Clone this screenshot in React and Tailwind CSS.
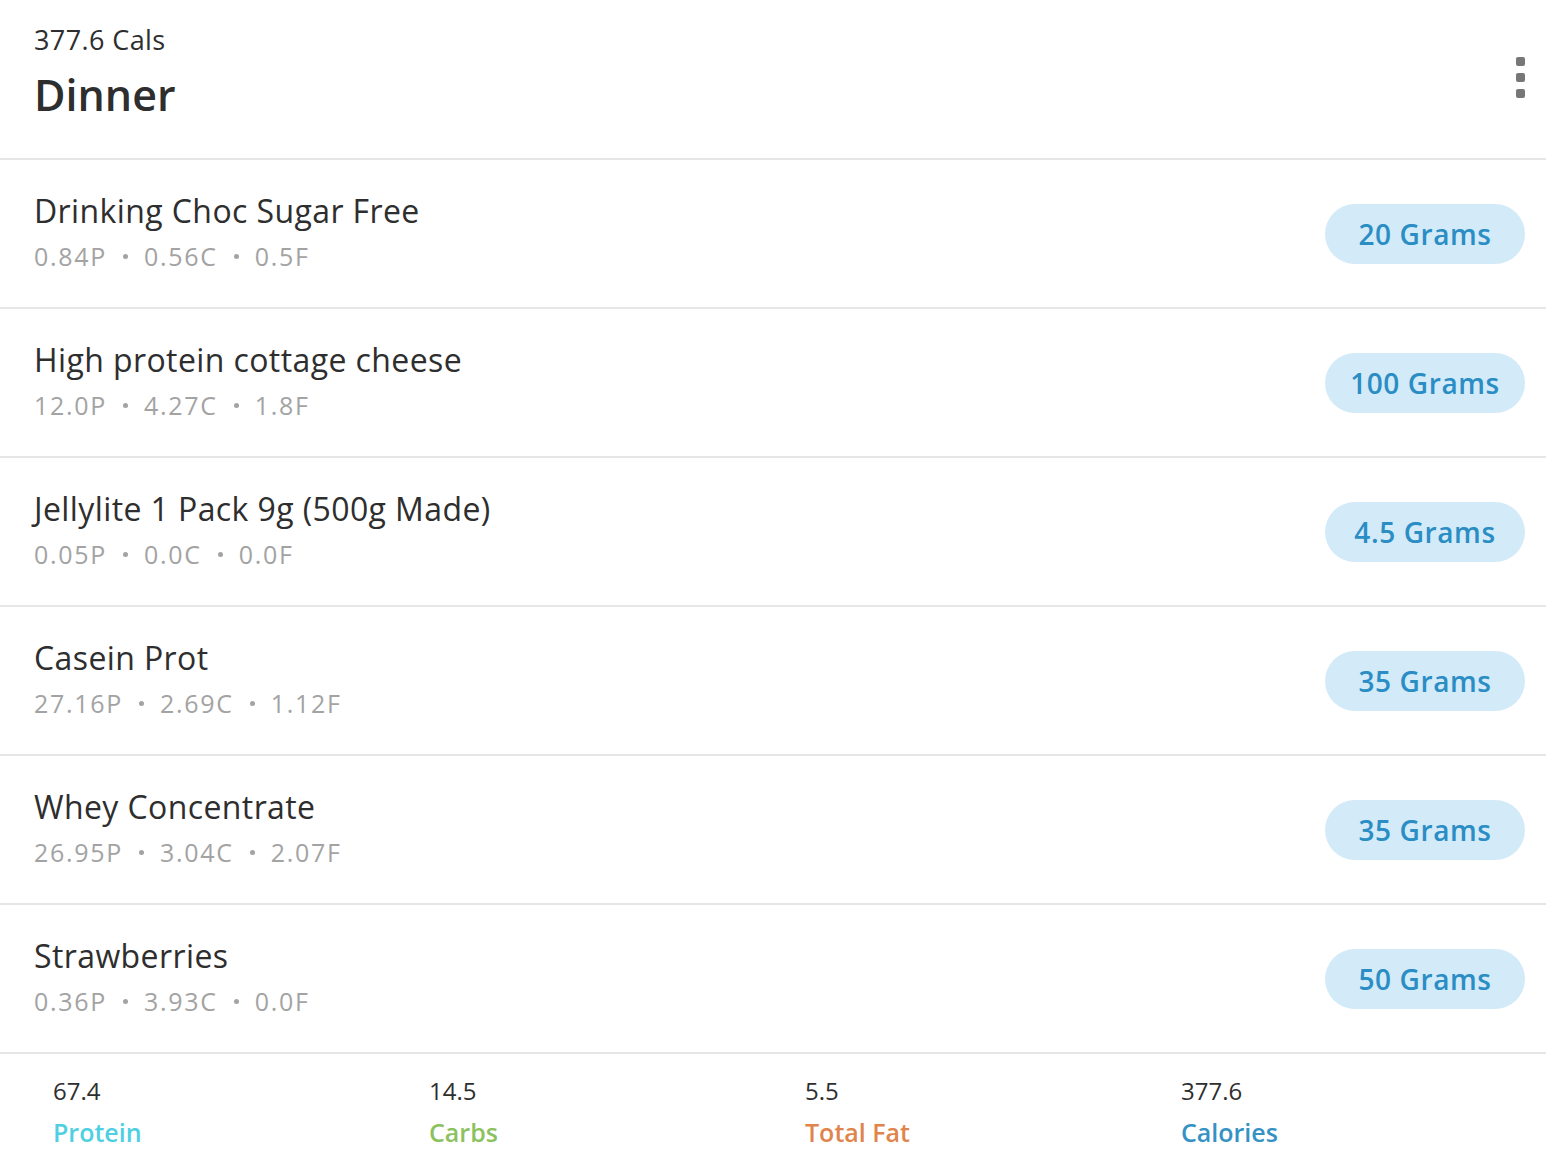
import React from 'react';

const items = [
  { name: 'Drinking Choc Sugar Free', p: '0.84P', c: '0.56C', f: '0.5F', qty: '20 Grams' },
  { name: 'High protein cottage cheese', p: '12.0P', c: '4.27C', f: '1.8F', qty: '100 Grams' },
  { name: 'Jellylite 1 Pack 9g (500g Made)', p: '0.05P', c: '0.0C', f: '0.0F', qty: '4.5 Grams' },
  { name: 'Casein Prot', p: '27.16P', c: '2.69C', f: '1.12F', qty: '35 Grams' },
  { name: 'Whey Concentrate', p: '26.95P', c: '3.04C', f: '2.07F', qty: '35 Grams' },
  { name: 'Strawberries', p: '0.36P', c: '3.93C', f: '0.0F', qty: '50 Grams' },
];

const totals = [
  { value: '67.4', label: 'Protein', color: 'text-[#4fcfe2]' },
  { value: '14.5', label: 'Carbs', color: 'text-[#8cc15f]' },
  { value: '5.5', label: 'Total Fat', color: 'text-[#e0844c]' },
  { value: '377.6', label: 'Calories', color: 'text-[#3592c4]' },
];

function Dot() {
  return <span className="mx-[16px] inline-block h-[5px] w-[5px] rounded-full bg-[#a3a3a3] align-middle" />;
}

export default function App() {
  return (
    <div className="min-h-screen w-full bg-white text-[#2e2e2e]" style={{ fontFamily: '"Open Sans", "Noto Sans", sans-serif' }}>
      <div className="flex h-[160px] justify-between border-b-2 border-[#e6e6e6] pl-[34px] pr-[21px]">
        <div className="pt-[24px]">
          <div className="text-[27px] leading-[32px] tracking-[0.4px]">377.6 Cals</div>
          <div className="mt-[12px] text-[43px] font-semibold leading-[54px]">Dinner</div>
        </div>
        <div className="flex flex-col gap-[7px] pt-[57px]">
          <span className="h-[9px] w-[9px] rounded-[2px] bg-[#777]" />
          <span className="h-[9px] w-[9px] rounded-[2px] bg-[#777]" />
          <span className="h-[9px] w-[9px] rounded-[2px] bg-[#777]" />
        </div>
      </div>

      {items.map((it) => (
        <div key={it.name} className="flex h-[149px] items-center justify-between border-b-2 border-[#e6e6e6] pl-[34px] pr-[21px]">
          <div className="pb-[4px]">
            <div className="text-[32px] leading-[40px] tracking-[0.4px]">{it.name}</div>
            <div className="mt-[9px] flex items-center text-[25px] leading-[32px] tracking-[1.7px] text-[#a3a3a3]">
              {it.p}
              <Dot />
              {it.c}
              <Dot />
              {it.f}
            </div>
          </div>
          <div className="flex h-[60px] min-w-[200px] items-center justify-center rounded-full bg-[#d3eaf9] px-5 text-[28px] font-semibold tracking-[0.6px] text-[#2a8dc4]">
            {it.qty}
          </div>
        </div>
      ))}

      <div className="flex pl-[53px] pt-[22px]">
        {totals.map((t) => (
          <div key={t.label} className="w-[376px] shrink-0">
            <div className="text-[24px] leading-[30px]">{t.value}</div>
            <div className={`mt-[10px] text-[25px] font-semibold leading-[32px] ${t.color}`}>{t.label}</div>
          </div>
        ))}
      </div>
    </div>
  );
}
